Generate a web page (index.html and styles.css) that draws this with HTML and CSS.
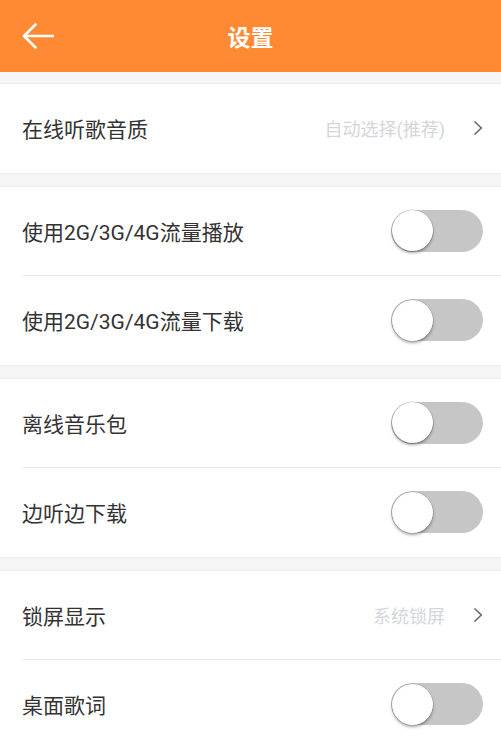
FILE: index.html
```html
<!DOCTYPE html>
<html lang="zh-CN">
<head>
<meta charset="utf-8">
<title>设置</title>
<link rel="stylesheet" href="styles.css">
</head>
<body>
<header class="topbar">
  <div class="topbar-side">
    <svg class="back-icon" width="34" height="28" viewBox="0 0 34 28" aria-hidden="true">
      <path d="M3 14 H32 M14.5 2.5 L3 14 L14.5 25.5" fill="none" stroke="#fff" stroke-width="2.6" stroke-linecap="round" stroke-linejoin="round"/>
    </svg>
  </div>
  <h1 class="topbar-title">设置</h1>
  <div class="topbar-side"></div>
</header>

<main class="settings">
  <section class="group group-first">
    <div class="row">
      <span class="label">在线听歌音质</span>
      <span class="value">自动选择(推荐)</span>
      <svg class="chevron" width="10" height="16" viewBox="0 0 10 16" aria-hidden="true"><path d="M1.5 1.5 L8.3 8 L1.5 14.5" fill="none" stroke="#6a6a6a" stroke-width="1.6"/></svg>
    </div>
  </section>

  <section class="group">
    <div class="row">
      <span class="label">使用2G/3G/4G流量播放</span>
      <span class="switch"><span class="knob"></span></span>
    </div>
    <div class="row">
      <span class="label">使用2G/3G/4G流量下载</span>
      <span class="switch"><span class="knob"></span></span>
    </div>
  </section>

  <section class="group">
    <div class="row">
      <span class="label">离线音乐包</span>
      <span class="switch"><span class="knob"></span></span>
    </div>
    <div class="row">
      <span class="label">边听边下载</span>
      <span class="switch"><span class="knob"></span></span>
    </div>
  </section>

  <section class="group group-open">
    <div class="row">
      <span class="label">锁屏显示</span>
      <span class="value">系统锁屏</span>
      <svg class="chevron" width="10" height="16" viewBox="0 0 10 16" aria-hidden="true"><path d="M1.5 1.5 L8.3 8 L1.5 14.5" fill="none" stroke="#6a6a6a" stroke-width="1.6"/></svg>
    </div>
    <div class="row">
      <span class="label">桌面歌词</span>
      <span class="switch"><span class="knob"></span></span>
    </div>
  </section>
</main>
</body>
</html>
```

FILE: styles.css
```css
* { box-sizing: border-box; }

html, body {
  margin: 0;
  padding: 0;
}

body {
  width: 501px;
  height: 748px;
  overflow: hidden;
  background: #f6f6f6;
  font-family: Roboto, "Noto Sans CJK SC", sans-serif;
  color: #333;
}

.topbar {
  height: 72px;
  background: #ff8a33;
  display: flex;
  align-items: center;
}

.topbar-side {
  width: 90px;
  display: flex;
  align-items: center;
  padding-left: 21px;
}

.back-icon { display: block; margin-top: -1px; }

.topbar-title {
  flex: 1;
  margin: 0;
  text-align: center;
  color: #fff;
  font-size: 23px;
  font-weight: 700;
  font-family: "Noto Sans CJK SC", sans-serif;
  line-height: 1;
}

.settings {
  display: flex;
  flex-direction: column;
}

.group {
  margin-top: 12px;
  background: #fff;
  border-top: 1px solid #ebebeb;
  border-bottom: 1px solid #ebebeb;
}

.group-first { margin-top: 11px; }

.group-open { border-bottom: none; }

.row {
  height: 88.5px;
  display: flex;
  align-items: center;
  padding: 0 18px 0 22px;
  position: relative;
}

.row + .row::before,
.group-open .row:last-child::after {
  content: "";
  position: absolute;
  left: 22px;
  right: 0;
  height: 1px;
  background: #ececec;
}

.row + .row::before { top: -1px; }

.group-open .row:last-child::after { bottom: -1px; }

.row + .row { margin-top: 1px; }

.label {
  flex: 1;
  font-size: 21px;
  color: #333;
  white-space: nowrap;
}

.value {
  font-size: 18px;
  color: #d3d6db;
  margin-right: 28px;
  white-space: nowrap;
}

.chevron { display: block; }

.switch {
  width: 92px;
  height: 42px;
  border-radius: 21px;
  background: #c6c6c6;
  display: flex;
  align-items: center;
  padding: 0 0 0 1px;
}

.knob {
  width: 41px;
  height: 41px;
  border-radius: 50%;
  background: #fff;
  box-shadow: 0 2px 3px rgba(0, 0, 0, 0.35), 0 0 0 0.5px rgba(0, 0, 0, 0.18);
}
```
